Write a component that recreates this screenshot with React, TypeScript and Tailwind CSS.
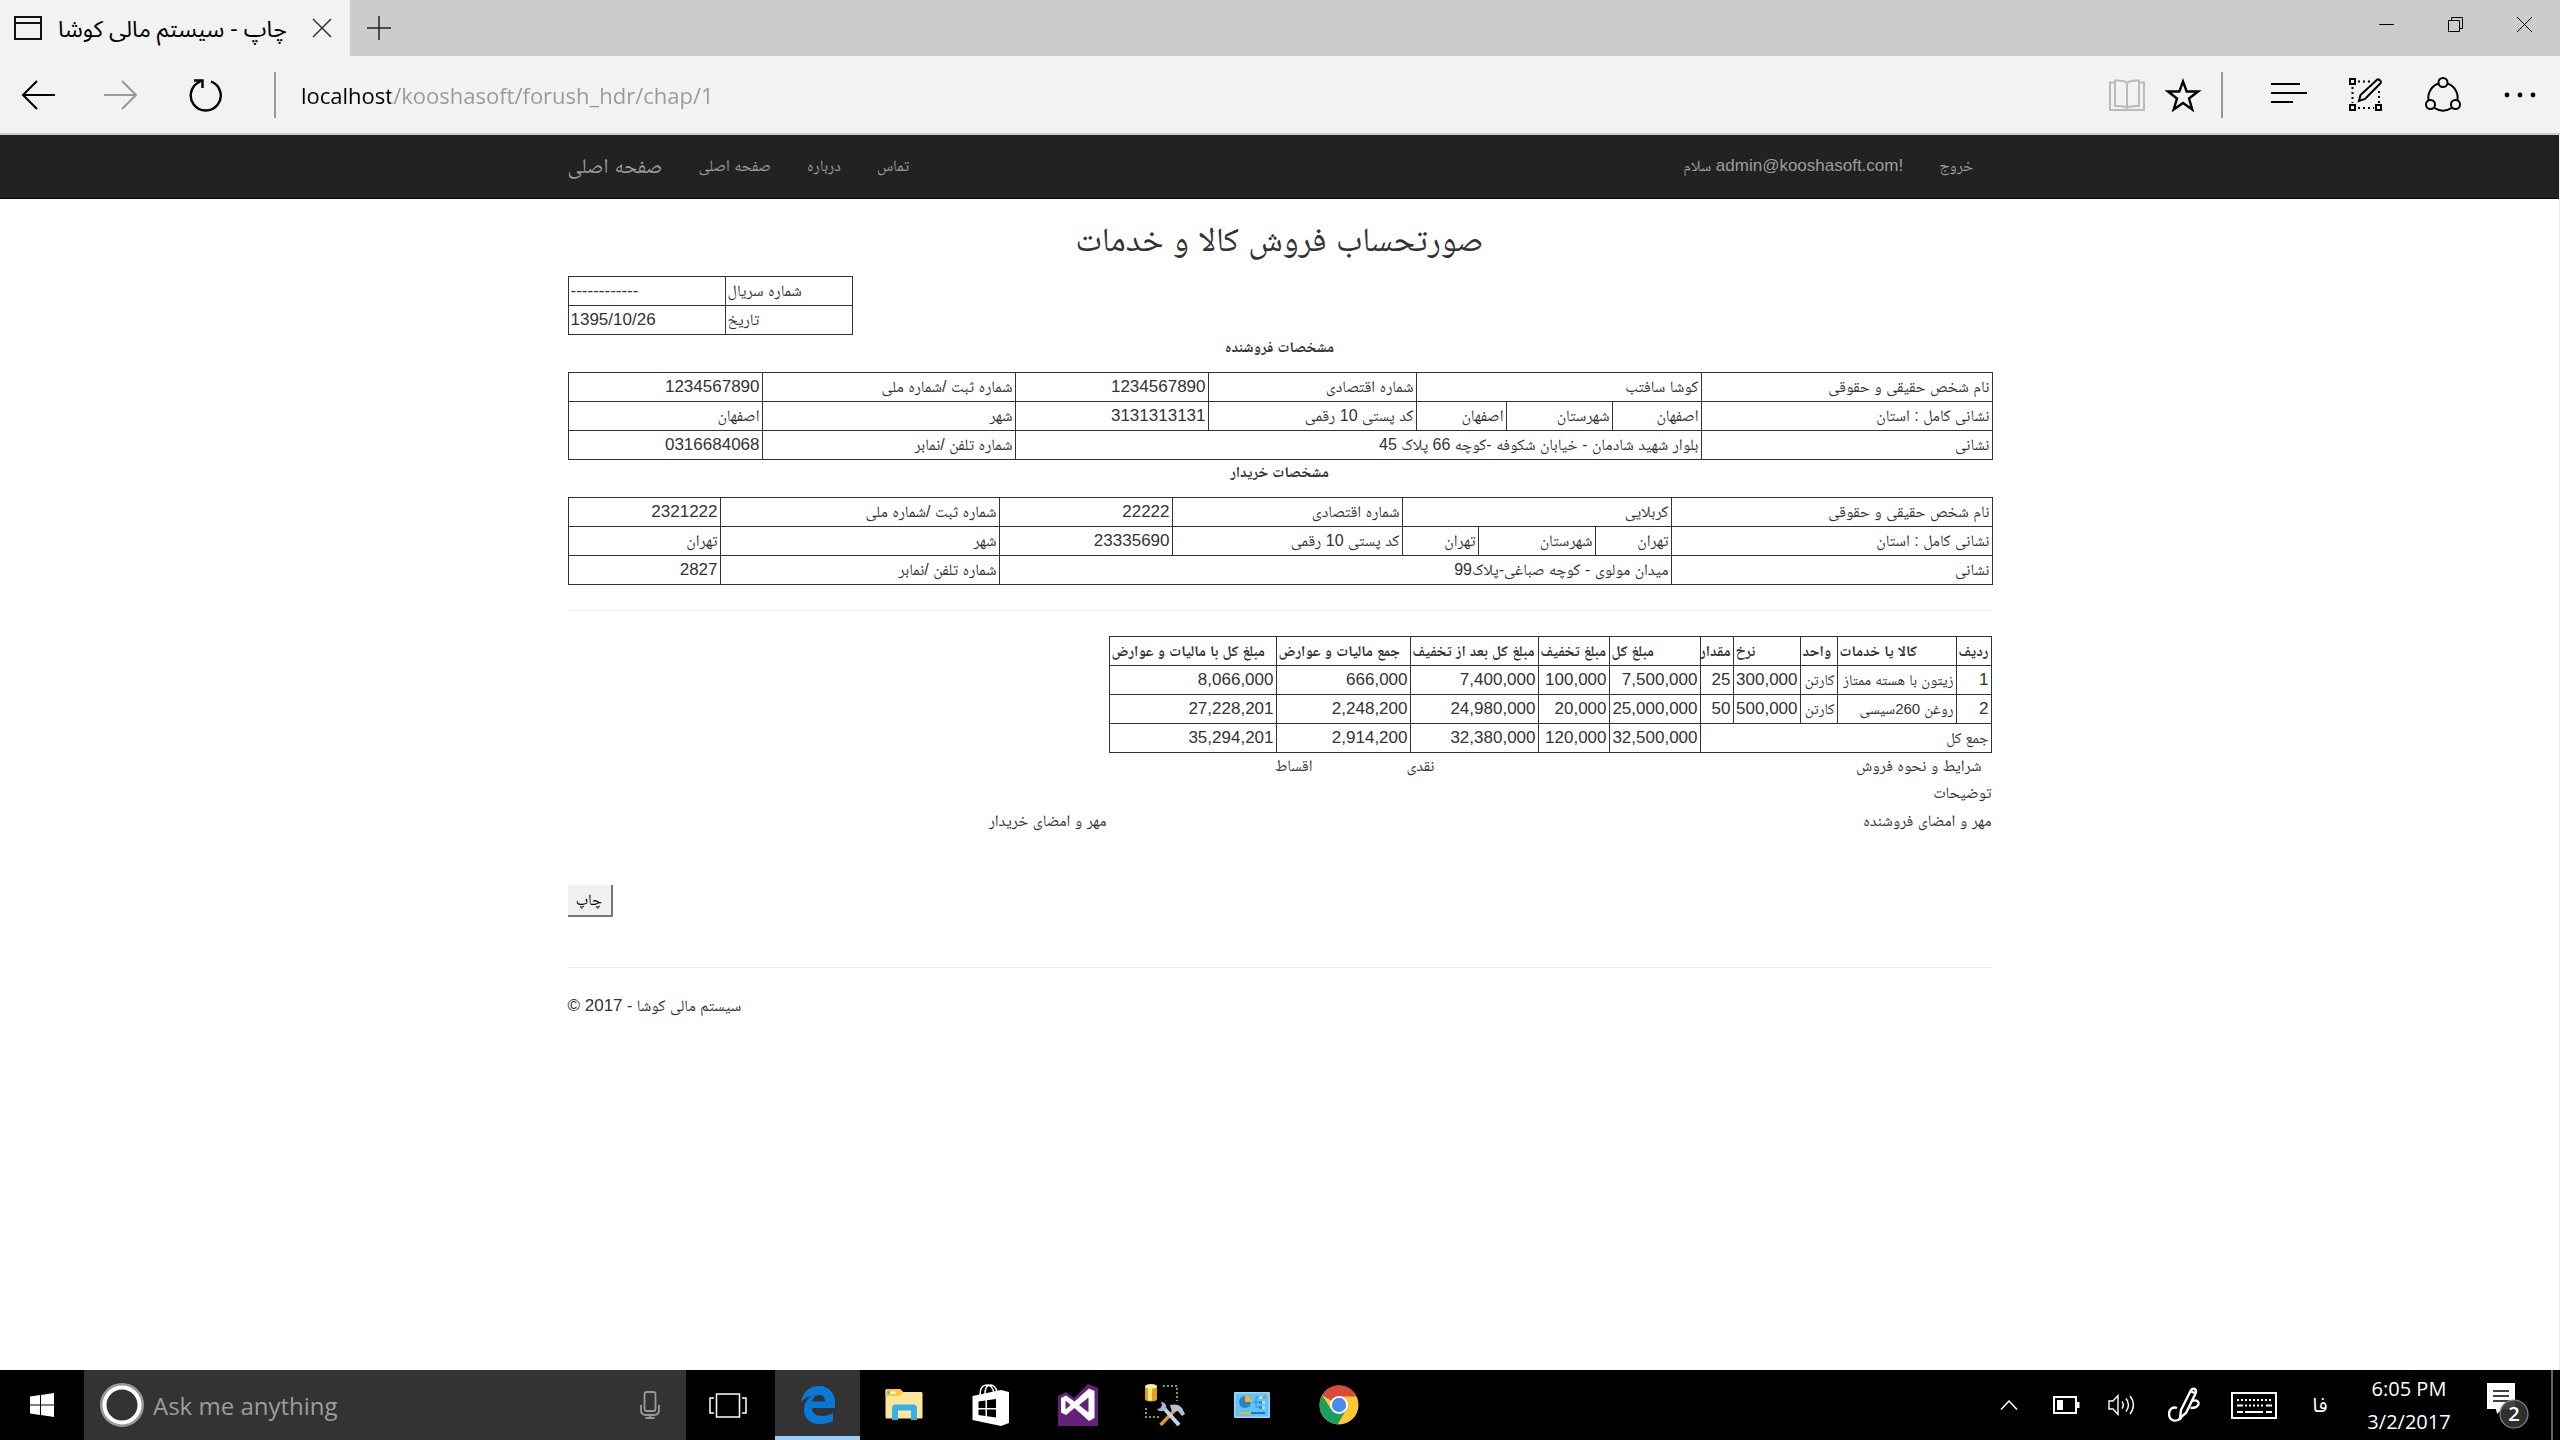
import type { ReactNode } from "react";

type Cell = { text: string; span?: number; num?: boolean };

const sellerCols = ["w-[291px]", "w-[89px]", "w-[106px]", "w-[90px]", "w-[208px]", "w-[193px]", "w-[253px]", "w-[194px]"];
const buyerCols = ["w-[321px]", "w-[76px]", "w-[117px]", "w-[76px]", "w-[230px]", "w-[173px]", "w-[279px]", "w-[152px]"];
const itemCols = ["w-[35px]", "w-[119px]", "w-[37px]", "w-[67px]", "w-[33px]", "w-[91px]", "w-[71px]", "w-[128px]", "w-[134px]", "w-[167px]"];

const seller: Cell[][] = [
  [
    { text: "نام شخص حقیقی و حقوقی" },
    { text: "کوشا سافتب", span: 3 },
    { text: "شماره اقتصادی" },
    { text: "1234567890", num: true },
    { text: "شماره ثبت /شماره ملی" },
    { text: "1234567890", num: true },
  ],
  [
    { text: "نشانی کامل : استان" },
    { text: "اصفهان" },
    { text: "شهرستان" },
    { text: "اصفهان" },
    { text: "کد پستی 10 رقمی" },
    { text: "3131313131", num: true },
    { text: "شهر" },
    { text: "اصفهان" },
  ],
  [
    { text: "نشانی" },
    { text: "بلوار شهید شادمان - خیابان شکوفه -کوچه 66 پلاک 45", span: 5 },
    { text: "شماره تلفن /نمابر" },
    { text: "0316684068", num: true },
  ],
];

const buyer: Cell[][] = [
  [
    { text: "نام شخص حقیقی و حقوقی" },
    { text: "کربلایی", span: 3 },
    { text: "شماره اقتصادی" },
    { text: "22222", num: true },
    { text: "شماره ثبت /شماره ملی" },
    { text: "2321222", num: true },
  ],
  [
    { text: "نشانی کامل : استان" },
    { text: "تهران" },
    { text: "شهرستان" },
    { text: "تهران" },
    { text: "کد پستی 10 رقمی" },
    { text: "23335690", num: true },
    { text: "شهر" },
    { text: "تهران" },
  ],
  [
    { text: "نشانی" },
    { text: "میدان مولوی - کوچه صباغی-پلاک99", span: 5 },
    { text: "شماره تلفن /نمابر" },
    { text: "2827", num: true },
  ],
];

const itemHeads = ["ردیف", "کالا یا خدمات", "واحد", "نرخ", "مقدار", "مبلغ کل", "مبلغ تخفیف", "مبلغ کل بعد از تخفیف", "جمع مالیات و عوارض", "مبلغ کل با مالیات و عوارض"];

const items: Cell[][] = [
  [
    { text: "1", num: true },
    { text: "زیتون با هسته ممتاز" },
    { text: "کارتن" },
    { text: "300,000", num: true },
    { text: "25", num: true },
    { text: "7,500,000", num: true },
    { text: "100,000", num: true },
    { text: "7,400,000", num: true },
    { text: "666,000", num: true },
    { text: "8,066,000", num: true },
  ],
  [
    { text: "2", num: true },
    { text: "روغن 260سیسی" },
    { text: "کارتن" },
    { text: "500,000", num: true },
    { text: "50", num: true },
    { text: "25,000,000", num: true },
    { text: "20,000", num: true },
    { text: "24,980,000", num: true },
    { text: "2,248,200", num: true },
    { text: "27,228,201", num: true },
  ],
  [
    { text: "جمع کل", span: 5 },
    { text: "32,500,000", num: true },
    { text: "120,000", num: true },
    { text: "32,380,000", num: true },
    { text: "2,914,200", num: true },
    { text: "35,294,201", num: true },
  ],
];

function Rows({ rows }: { rows: Cell[][] }) {
  return (
    <tbody>
      {rows.map((row, r) => (
        <tr key={r} className="h-[29px]">
          {row.map((c, i) => (
            <td
              key={i}
              colSpan={c.span}
              className={
                c.num
                  ? "border border-[#333] px-0.5 text-right text-[17px] leading-6"
                  : "border border-[#333] px-0.5 text-right leading-6"
              }
            >
              {c.text}
            </td>
          ))}
        </tr>
      ))}
    </tbody>
  );
}

function Cols({ widths }: { widths: string[] }) {
  return (
    <colgroup>
      {widths.map((w, i) => (
        <col key={i} className={w} />
      ))}
    </colgroup>
  );
}

function PartyTable({ title, widths, rows }: { title: string; widths: string[]; rows: Cell[][] }) {
  return (
    <section>
      <h2 className="pb-[13px] text-center text-[15px] leading-6 font-bold">{title}</h2>
      <table dir="rtl" aria-label={title} className="w-full table-fixed border-collapse whitespace-nowrap">
        <Cols widths={widths} />
        <Rows rows={rows} />
      </table>
    </section>
  );
}

function IconButton({ label, className, children }: { label: string; className: string; children: ReactNode }) {
  return (
    <button type="button" aria-label={label} className={`flex shrink-0 items-center justify-center ${className}`}>
      {children}
    </button>
  );
}

function TitleBar() {
  return (
    <div className="flex h-14 bg-[#ccc] pr-px">
      <div className="flex w-[350px] items-center bg-[#f2f2f2] pl-3.5">
        <svg width="28" height="24" viewBox="0 0 28 24" fill="none" stroke="#111" strokeWidth="2">
          <path d="M1 1h26v22H1zM1 7h26" />
        </svg>
        <span dir="rtl" className="ml-4 w-[234px] text-left text-[23px] leading-8 whitespace-nowrap text-black">
          چاپ - سیستم مالی کوشا
        </span>
        <IconButton label="Close tab" className="ml-2.5 h-10 w-10">
          <svg width="20" height="20" viewBox="0 0 20 20" stroke="#333" strokeWidth="1.5">
            <path d="M1 1l18 18M19 1L1 19" />
          </svg>
        </IconButton>
      </div>
      <IconButton label="New tab" className="h-14 w-[58px]">
        <svg width="24" height="24" viewBox="0 0 24 24" stroke="#222" strokeWidth="1.500">
          <path d="M12 0v24M0 12h24" />
        </svg>
      </IconButton>
      <div className="flex-1" />
      <IconButton label="Minimize" className="h-[49px] w-[69px]">
        <svg width="15" height="15" viewBox="0 0 15 15" stroke="#000">
          <path d="M0 7.5h15" />
        </svg>
      </IconButton>
      <IconButton label="Restore" className="h-[49px] w-[69px]">
        <svg width="15" height="15" viewBox="0 0 15 15" fill="none" stroke="#000">
          <path d="M.5 3.500h11v11H.5zM3.500 3.500v-3h11v11h-3" />
        </svg>
      </IconButton>
      <IconButton label="Close" className="h-[49px] w-[69px]">
        <svg width="15" height="15" viewBox="0 0 15 15" stroke="#000">
          <path d="M0 0l15 15M15 0L0 15" />
        </svg>
      </IconButton>
    </div>
  );
}

function AddressBar() {
  return (
    <div className="flex h-[79px] items-center border-b-2 border-[#ccc] bg-[#f2f2f2] pr-0.5">
      <IconButton label="Back" className="h-14 w-[76px]">
        <svg width="34" height="30" viewBox="0 0 34 30" fill="none" stroke="#000" strokeWidth="2">
          <path d="M34 15H2M16 1L2 15l14 14" />
        </svg>
      </IconButton>
      <IconButton label="Forward" className="h-14 w-[90px]">
        <svg width="34" height="30" viewBox="0 0 34 30" fill="none" stroke="#999" strokeWidth="2">
          <path d="M0 15h32M18 1l14 14-14 14" />
        </svg>
      </IconButton>
      <IconButton label="Refresh" className="h-14 w-20">
        <svg width="34" height="34" viewBox="0 0 34 34" fill="none" stroke="#000" strokeWidth="2.400">
          <path d="M22 3.500A15 15 0 1 1 11.500 3.500" />
          <path d="M5 2.500h8.500V10" />
        </svg>
      </IconButton>
      <div className="ml-7 h-[46px] w-0.5 bg-[#999]" />
      <input
        aria-label="Address"
        defaultValue="localhost/kooshasoft/forush_hdr/chap/1"
        className="ml-[25px] h-12 min-w-0 flex-1 bg-[linear-gradient(to_right,#000_90px,#999_90px)] bg-clip-text text-[22px] leading-8 text-transparent outline-none"
      />
      <IconButton label="Reading view" className="h-14 w-14">
        <svg width="36" height="32" viewBox="0 0 36 32" fill="none" stroke="#bbb" strokeWidth="2">
          <path d="M6 3.500H1V31h34V3.500h-5" />
          <path d="M18 4c-3-3-8-2.500-12-2.500V27c4 0 9-.5 12 2 3-2.500 8-2 12-2V1.500c-4 0-9-.5-12 2.500zM18 4v25" />
        </svg>
      </IconButton>
      <IconButton label="Favorites" className="h-14 w-14">
        <svg width="36" height="34" viewBox="0 0 36 34" fill="none" stroke="#000" strokeWidth="2.400">
          <path d="M18 3.500l3.700 10H33l-9 7 3.300 11L18 25l-9.300 6.500L12 20.500l-9-7h11.300z" />
        </svg>
      </IconButton>
      <div className="ml-2.5 h-[46px] w-0.5 bg-[#999]" />
      <IconButton label="Hub" className="ml-[27px] h-14 w-[77px]">
        <svg width="36" height="26" viewBox="0 0 36 26" stroke="#000" strokeWidth="2">
          <path d="M0 2h29M0 11h36M0 20h22" />
        </svg>
      </IconButton>
      <IconButton label="Make a web note" className="h-14 w-[77px]">
        <svg width="34" height="34" viewBox="0 0 34 34" fill="none" stroke="#000" strokeWidth="2">
          <path d="M1 1h5v5H1zM1 27h5v5H1zM27 27h5v5h-5z" />
          <path d="M9 3.500h12M9 30h16M3.500 9v16M30 13v12" strokeDasharray="2 3" />
          <path d="M10 23l1.500-6L28 1.800c1.500-1.400 5 1.700 3.500 3.400L16 21z" />
        </svg>
      </IconButton>
      <IconButton label="Share" className="h-14 w-[77px]">
        <svg width="36" height="36" viewBox="0 0 36 36" fill="none" stroke="#000" strokeWidth="2">
          <circle cx="18" cy="5.500" r="4.500" />
          <circle cx="5.500" cy="27.500" r="4.500" />
          <circle cx="30.500" cy="27.500" r="4.500" />
          <path d="M13.500 6.500A15 15 0 0 0 3.500 23M22.500 6.500A15 15 0 0 1 32.500 23M9.500 31a15 15 0 0 0 17 0" />
        </svg>
      </IconButton>
      <IconButton label="More" className="h-14 w-[77px]">
        <svg width="32" height="6" viewBox="0 0 32 6" fill="#000">
          <circle cx="3" cy="3" r="2.400" />
          <circle cx="16" cy="3" r="2.400" />
          <circle cx="29" cy="3" r="2.400" />
        </svg>
      </IconButton>
    </div>
  );
}

function NavBar() {
  return (
    <nav className="h-16 border-b border-[#080808] bg-[#222] text-base leading-6 whitespace-nowrap text-[#9d9d9d]">
      <div className="mx-auto flex h-full w-full max-w-[1424px] items-center gap-9 pr-[18px] pb-0.5">
        <a href="#home" className="text-[21px]">صفحه اصلی</a>
        <a href="#home">صفحه اصلی</a>
        <a href="#about">درباره</a>
        <a href="#contact">تماس</a>
        <a href="#account" className="ml-auto">
          سلام <span className="text-[17px]">admin@kooshasoft.com!</span>
        </a>
        <a href="#logout">خروج</a>
      </div>
    </nav>
  );
}

function Invoice() {
  return (
    <main className="mx-auto w-full max-w-[1424px] flex-1 pt-[18px] text-base leading-6 text-[#333]">
      <h1 className="text-center text-[34px] leading-[45px]">صورتحساب فروش کالا و خدمات</h1>
      <table className="mt-3.5 w-[285px] table-fixed border-collapse whitespace-nowrap">
        <tbody>
          <tr className="h-[29px]">
            <td className="w-[157px] border border-[#333] px-0.5 text-[17px]">------------</td>
            <td className="border border-[#333] px-0.5">شماره سریال</td>
          </tr>
          <tr className="h-[29px]">
            <td className="border border-[#333] px-0.5 text-[17px]">1395/10/26</td>
            <td className="border border-[#333] px-0.5">تاریخ</td>
          </tr>
        </tbody>
      </table>
      <PartyTable title="مشخصات فروشنده" widths={sellerCols} rows={seller} />
      <PartyTable title="مشخصات خریدار" widths={buyerCols} rows={buyer} />
      <hr className="my-[25px] border-[#eee]" />
      <div dir="rtl">
        <table className="w-[882px] table-fixed border-collapse text-[15px] whitespace-nowrap">
          <Cols widths={itemCols} />
          <thead>
            <tr className="h-[29px]">
              {itemHeads.map((h) => (
                <th key={h} className="border border-[#333] px-0.5 text-left leading-6 font-bold">
                  {h}
                </th>
              ))}
            </tr>
          </thead>
          <Rows rows={items} />
        </table>
        <div className="flex h-7 items-center pr-2.5 pb-0.5">
          <span className="w-[547px]">شرایط و نحوه فروش</span>
          <span className="w-[122px]">نقدی</span>
          <span>اقساط</span>
        </div>
        <p className="h-7 leading-6">توضیحات</p>
        <div className="flex h-7 items-center pb-1">
          <span className="w-[885px]">مهر و امضای فروشنده</span>
          <span>مهر و امضای خریدار</span>
        </div>
      </div>
      <button
        type="button"
        className="mt-12 flex h-8 w-[45px] items-center justify-center border-r-2 border-b-2 border-[#777] bg-[#f0f0f0] text-black"
      >
        چاپ
      </button>
      <hr className="mt-[50px] border-[#eee]" />
      <footer className="mt-[26px]">
        <p>
          <span className="text-[17px]">© 2017</span> - سیستم مالی کوشا
        </p>
      </footer>
    </main>
  );
}

function TaskBar() {
  return (
    <div className="flex h-[70px] items-stretch bg-black text-white">
      <IconButton label="Start" className="w-[84px]">
        <svg width="24" height="24" viewBox="0 0 24 24" fill="#fff">
          <path d="M0 3.500l10-1.400v9.400H0zM11 2l13-2v11.500H11zM0 12.500h10v9.400L0 20.500zM11 12.500h13V24l-13-2z" />
        </svg>
      </IconButton>
      <div className="flex w-[602px] items-center bg-[#333] pl-4 pr-[26px]">
        <svg width="44" height="44" viewBox="0 0 44 44" fill="none">
          <circle cx="22" cy="22" r="20.500" stroke="#999" strokeWidth="3" />
          <circle cx="22" cy="22" r="17.500" stroke="#fff" strokeWidth="4" />
        </svg>
        <input
          aria-label="Search"
          placeholder="Ask me anything"
          className="ml-[9px] h-12 min-w-0 flex-1 bg-transparent text-[24px] leading-8 outline-none placeholder:text-[#9c9c9c]"
        />
        <svg width="20" height="28" viewBox="0 0 20 28" fill="none" stroke="#999" strokeWidth="1.800">
          <rect x="4.500" y="1" width="11" height="19" rx="2" />
          <path d="M1 14v5c0 3 2 5 5 5h8c3 0 5-2 5-5v-5M10 24v3M5.500 27h9" />
        </svg>
      </div>
      <IconButton label="Task view" className="w-[84px]">
        <svg width="38" height="25" viewBox="0 0 38 25" fill="none" stroke="#fff" strokeWidth="1.500">
          <path d="M7.500 1h23v23h-23zM5 5H1v15h4M33 5h4v15h-4" />
        </svg>
      </IconButton>
      <IconButton label="Microsoft Edge" className="ml-[5px] w-[85px] border-b-4 border-[#9bcdfa] bg-[#333] pt-1">
        <svg width="36" height="38" viewBox="0 0 36 38" fill="#0a78d7">
          <path d="M1 17C2 7 9 0 19 0c11 0 16 8 16 17v5H12c0 5 4 8 10 8 4 0 8-1 11-3v8c-4 2-8 3-13 3C10 38 4 32 4 24c0-6 3-11 8-14C7 11 3 13 1 17zm11.500-1.500H25c0-4-2-6.500-6-6.500-3.500 0-6 2.500-6.500 6.500z" />
        </svg>
      </IconButton>
      <IconButton label="File Explorer" className="w-[87px]">
        <svg width="38" height="32" viewBox="0 0 38 32">
          <path d="M.5 1.500C.5.700 1 0 2 0h13l3 3h18c1 0 1.500.7 1.500 1.500V28c0 1-.5 1.500-1.500 1.500H2c-1 0-1.500-.5-1.500-1.500z" fill="#ffe69a" />
          <path d="M.5 7V1.500C.5.700 1 0 2 0h13l3 3-3 4z" fill="#ffc92e" />
          <path d="M5 2.500h6v2H5z" fill="#fff" />
          <path d="M2.500 2.500H5v2H2.500z" fill="#3db4e8" />
          <path d="M7 31V19c0-2 1.500-3.500 3.500-3.500h18c2 0 3.500 1.500 3.500 3.500v12h-6v-9.500H13V31z" fill="#35b1e8" />
        </svg>
      </IconButton>
      <IconButton label="Store" className="w-[87px]">
        <svg width="38" height="42" viewBox="0 0 38 42">
          <path d="M8 11C8 4 11 1 15 1s6 3 7 8M13 10c0-6 2-9 5.500-9S24 4 25 8" fill="none" stroke="#fff" strokeWidth="1.500" />
          <path d="M.5 12L29 6l8 2v31l-8 3L.5 36z" fill="#fff" />
          <path d="M6.500 17.500l7-1V24h-7zM15 16.300l9-1.300v9h-9zM6.500 25.500h7V32l-7-1zM15 25.500h9V33.500l-9-1.300z" fill="#000" />
        </svg>
      </IconButton>
      <IconButton label="Visual Studio" className="w-[87px]">
        <svg width="40" height="42" viewBox="0 0 40 42">
          <path d="M0 42V12l8-4 8 6L30 0l10 4v38z" fill="#68217a" />
          <path d="M3 14l5-2.500 8.500 6L31 4.500l5.500 2.500v27L31 37 16.500 24 8 31l-5-2.500z" fill="#fff" />
          <path d="M7.500 16.500v9l5-4.500zM21 21l9.500 7.500v-15z" fill="#68217a" />
        </svg>
      </IconButton>
      <IconButton label="SQL tools" className="w-[87px]">
        <svg width="42" height="42" viewBox="0 0 42 42" fill="none">
          <path d="M1 2.500C1 1 3 0 7 0s6 1 6 2.500V15c0 1.500-2 2.500-6 2.500S1 16.500 1 15z" fill="#e0a21b" />
          <path d="M4 4h4v12.500H4z" fill="#ffe277" />
          <ellipse cx="7" cy="2.500" rx="6" ry="2.200" fill="#fff0b0" />
          <path d="M19 2h14v15M2 24v9h14" stroke="#5cb046" strokeWidth="2" strokeDasharray="2 2" />
          <path d="M16.500 41L33 24" stroke="#d89b28" strokeWidth="3.500" />
          <path d="M26 21c4-1 9-1 12 3l3 6-3 2-4-5-6 1z" fill="#b6bfd0" />
          <path d="M18 22l17 19" stroke="#c7cfe2" strokeWidth="4" />
          <path d="M17 18c4 0 6 3 5 7-3 3-7 3-9 0l4-1 1-3z" fill="#aab6cc" />
        </svg>
      </IconButton>
      <IconButton label="Control Panel" className="w-[87px]">
        <svg width="36" height="26" viewBox="0 0 36 26">
          <rect width="36" height="26" rx="1" fill="#9bd9fb" />
          <rect x="1.500" y="1.500" width="33" height="23" fill="#5fc3fa" />
          <circle cx="11" cy="10" r="6" fill="#2b83c6" />
          <path d="M11 10V3.500a6.500 6.500 0 0 1 6.500 6.500z" fill="#ffb21c" />
          <path d="M19 10h3V5h4M22 10h3M22 10v5h3" stroke="#2d91cf" fill="none" />
          <path d="M25 4h3v3h-3zM25 9h6v3h-6zM25 14h6v3h-6z" fill="#a9e0ff" />
          <path d="M25 9h3v3h-3zM25 14h3v3h-3z" fill="#2d91cf" />
          <circle cx="30.500" cy="5" r="1.500" fill="#f47b20" />
          <path d="M5 20h12v2H5z" fill="#ffb21c" />
          <path d="M17 20h14v2H17z" fill="#1878c0" />
        </svg>
      </IconButton>
      <IconButton label="Chrome" className="w-[87px]">
        <svg width="40" height="40" viewBox="0 0 40 40">
          <circle cx="20" cy="20" r="19.500" fill="#fcc934" />
          <path d="M20 20L3.100 10.300A19.500 19.500 0 0 1 36.900 10.300L37.500 11.500H20z" fill="#d9493c" />
          <path d="M3.100 10.300A19.500 19.500 0 0 0 18.500 39.400L27 25 12 24z" fill="#1b9f5c" />
          <circle cx="20" cy="20" r="9" fill="#fff" />
          <circle cx="20" cy="20" r="7.200" fill="#4a8af4" />
        </svg>
      </IconButton>
      <div className="flex-1" />
      <IconButton label="Show hidden icons" className="w-[60px]">
        <svg width="18" height="10" viewBox="0 0 18 10" fill="none" stroke="#fff" strokeWidth="1.500">
          <path d="M1 9.500l8-8.500 8 8.500" />
        </svg>
      </IconButton>
      <IconButton label="Battery" className="w-[54px]">
        <svg width="27" height="18" viewBox="0 0 27 18">
          <path d="M1 1h22v16H1z" fill="none" stroke="#fff" strokeWidth="2" />
          <path d="M4 4h6v10H4zM24 6h2.500v6H24z" fill="#fff" />
        </svg>
      </IconButton>
      <IconButton label="Volume" className="w-[57px]">
        <svg width="28" height="24" viewBox="0 0 28 24" fill="none" stroke="#fff" strokeWidth="1.400">
          <path d="M1 8h4l5-5.500v19L5 16H1z" />
          <path d="M14 8.500c1.500 2 1.500 5 0 7M18 5.500c3 4 3 9 0 13M22 3c4.500 5.500 4.500 12.500 0 18" />
        </svg>
      </IconButton>
      <IconButton label="Windows Ink Workspace" className="w-[68px]">
        <svg width="32" height="36" viewBox="0 0 32 36" fill="none" stroke="#fff" strokeWidth="2.400">
          <path d="M9 21c-4-1.500-8 1-8 6s4 8 9 6c2-.8 3-2 3.500-3.500M24 14c4-1.500 7 0 6.500 3-.5 3-4 4-8 4" />
          <path d="M12 31l1-8L22.500 4l5 2.500L18 26l-6 5zM23 3.500c1-3 5-2 5 1l-.5 2" />
        </svg>
      </IconButton>
      <IconButton label="Touch keyboard" className="w-[72px]">
        <svg width="46" height="27" viewBox="0 0 46 27" fill="none" stroke="#fff" strokeWidth="2">
          <path d="M1 1h44v25H1z" />
          <path d="M6 8h35" strokeDasharray="2 2" />
          <path d="M6 13.500h6M35 13.500h6" />
          <path d="M14 13.500h18" strokeDasharray="2 2" />
          <path d="M6 20h6M14 20h18M35 20h6" />
        </svg>
      </IconButton>
      <button type="button" className="w-[60px] text-xl">فا</button>
      <button type="button" className="flex w-[118px] flex-col items-center justify-center text-xl leading-[33px] whitespace-nowrap">
        <span>6:05 PM</span>
        <span>3/2/2017</span>
      </button>
      <IconButton label="Notifications" className="w-20">
        <span className="relative block h-[50px] w-[42px]">
          <svg width="42" height="50" viewBox="0 0 42 50">
            <path d="M0 3h28v26H15l-5 5-1-5H0z" fill="#fff" />
            <path d="M6 11h16M6 16h16M6 21h16" stroke="#000" strokeWidth="1.500" />
            <circle cx="27" cy="34" r="14" fill="#333" fillOpacity=".92" stroke="#888" strokeWidth="1.200" />
          </svg>
          <span className="absolute top-[22px] left-[13px] w-7 text-center text-xl leading-6 font-semibold">2</span>
        </span>
      </IconButton>
      <div className="mr-[7px] ml-[3px] w-0.5 bg-[#666]" />
    </div>
  );
}

export default function App() {
  return (
    <div className="flex min-h-screen flex-col bg-white">
      <header className="font-['Open_Sans','Noto_Sans_Arabic','DejaVu_Sans_Condensed',sans-serif]">
        <TitleBar />
        <AddressBar />
      </header>
      <div className="flex flex-1 flex-col border-r border-[#eee] font-['Liberation_Sans','Noto_Naskh_Arabic','DejaVu_Sans_Condensed',sans-serif]">
        <NavBar />
        <Invoice />
      </div>
      <div className="font-['Open_Sans','Noto_Sans_Arabic','DejaVu_Sans_Condensed',sans-serif]">
        <TaskBar />
      </div>
    </div>
  );
}
